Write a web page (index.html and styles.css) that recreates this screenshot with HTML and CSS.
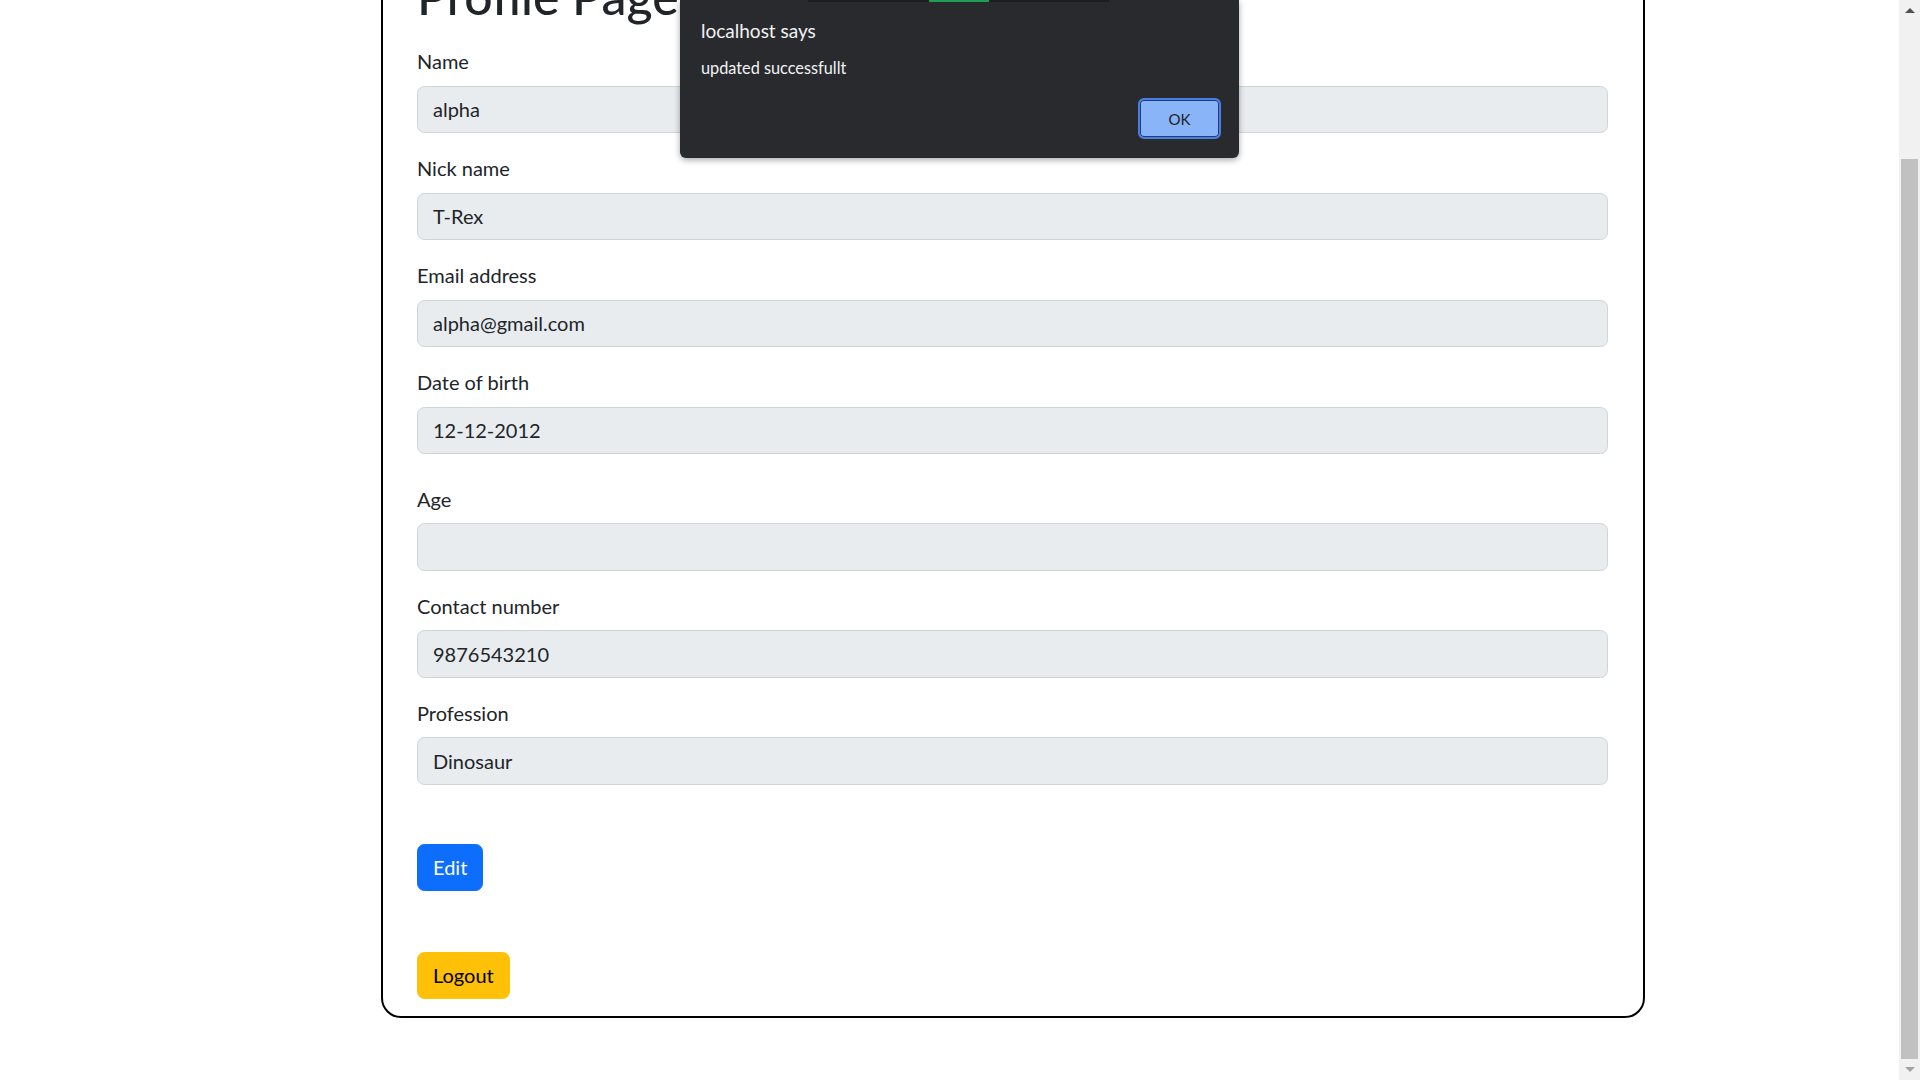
FILE: index.html
```html
<!DOCTYPE html>
<html lang="en">
<head>
<meta charset="utf-8">
<title>Profile Page</title>
<link rel="stylesheet" href="styles.css">
</head>
<body>
<div class="viewport">
  <main class="page">
    <section class="card">
      <h1 class="title">Profile Page</h1>
      <div class="field">
        <label class="form-label">Name</label>
        <div class="form-control">alpha</div>
      </div>
      <div class="field">
        <label class="form-label">Nick name</label>
        <div class="form-control">T-Rex</div>
      </div>
      <div class="field">
        <label class="form-label">Email address</label>
        <div class="form-control">alpha@gmail.com</div>
      </div>
      <div class="field field-date">
        <label class="form-label">Date of birth</label>
        <div class="form-control">12-12-2012</div>
      </div>
      <div class="field">
        <label class="form-label">Age</label>
        <div class="form-control"></div>
      </div>
      <div class="field">
        <label class="form-label">Contact number</label>
        <div class="form-control">9876543210</div>
      </div>
      <div class="field">
        <label class="form-label">Profession</label>
        <div class="form-control">Dinosaur</div>
      </div>
      <div class="actions">
        <button class="btn btn-primary">Edit</button>
        <button class="btn btn-warning">Logout</button>
      </div>
    </section>

    <div class="dialog" role="alertdialog">
      <div class="dialog-strip"><span class="dialog-strip-active"></span></div>
      <div class="dialog-title">localhost says</div>
      <div class="dialog-message">updated successfullt</div>
      <div class="dialog-buttons">
        <button class="dialog-ok">OK</button>
      </div>
    </div>
  </main>

  <div class="scrollbar">
    <div class="scroll-arrow scroll-up"><span class="tri tri-up"></span></div>
    <div class="scroll-track">
      <div class="scroll-thumb"></div>
    </div>
    <div class="scroll-arrow scroll-down"><span class="tri tri-down"></span></div>
  </div>
</div>
</body>
</html>
```

FILE: styles.css
```css
* { box-sizing: border-box; }

html, body {
  margin: 0;
  padding: 0;
  height: 100%;
  overflow: hidden;
  background: #fff;
}

body {
  font-family: "Segoe UI", Lato, Roboto, "Liberation Sans", sans-serif;
  color: #212529;
  font-size: 20px;
  line-height: 1.5;
}

.viewport {
  display: flex;
  width: 1920px;
  height: 1080px;
}

.page {
  flex: 1;
  position: relative;
  overflow: hidden;
}

/* card */
.card {
  width: 1264px;
  margin: -36px 0 0 381px;
  border: 2px solid #000;
  border-radius: 20px;
  padding: 0 35px 17px 34px;
}

.title {
  margin: 0 0 20px;
  font-size: 50px;
  line-height: 60px;
  font-weight: 500;
  color: #212529;
}

.field {
  margin-bottom: 20px;
}

.field-date {
  margin-bottom: 29.5px;
}

.form-label {
  display: block;
  margin-bottom: 9.5px;
  font-size: 20px;
  line-height: 30px;
}

.form-control {
  height: 47.5px;
  padding: 7.5px 15px;
  font-size: 20px;
  line-height: 30px;
  color: #212529;
  background: #e9ecef;
  border: 1.25px solid #ced4da;
  border-radius: 7.5px;
}

.actions {
  display: flex;
  flex-direction: column;
  align-items: flex-start;
  gap: 60.5px;
  padding-top: 39px;
}

.btn {
  font-family: inherit;
  font-size: 20px;
  line-height: 30px;
  height: 47.5px;
  padding: 7.5px 15px;
  border: 1.25px solid transparent;
  border-radius: 7.5px;
  cursor: pointer;
}

.btn-primary {
  background: #0d6efd;
  border-color: #0d6efd;
  color: #fff;
}

.btn-warning {
  background: #ffc107;
  border-color: #ffc107;
  color: #000;
}

/* alert dialog */
.dialog {
  position: absolute;
  top: 0;
  left: 680px;
  width: 559px;
  height: 158px;
  background: #292a2d;
  border-radius: 0 0 6px 6px;
  box-shadow: 0 2px 6px rgba(0, 0, 0, 0.35);
  padding: 18px 18px 19px 21px;
  display: flex;
  flex-direction: column;
  color: #f1f3f4;
}

.dialog-strip {
  position: absolute;
  top: 0;
  left: 128px;
  width: 301px;
  height: 2px;
  background: #1c1d1f;
}

.dialog-strip-active {
  position: absolute;
  left: 121px;
  top: 0;
  width: 60px;
  height: 2px;
  background: #1f9d55;
}

.dialog-title {
  font-size: 19px;
  line-height: 26px;
}

.dialog-message {
  margin-top: 12.5px;
  font-size: 16.3px;
  line-height: 22px;
}

.dialog-buttons {
  margin-top: auto;
  display: flex;
  justify-content: flex-end;
}

.dialog-ok {
  width: 83px;
  height: 41px;
  font-family: inherit;
  font-size: 15px;
  color: #202124;
  background: #8ab4f8;
  border: 2px solid #4a7fe0;
  border-radius: 6px;
  box-shadow: inset 0 0 0 1px #1d3c78;
  padding: 0;
}

/* scrollbar */
.scrollbar {
  width: 21px;
  height: 1080px;
  background: #f1f1f1;
  display: flex;
  flex-direction: column;
}

.scroll-arrow {
  height: 21px;
  display: flex;
  align-items: center;
  justify-content: center;
  flex: none;
}

.scroll-track {
  flex: 1;
  display: flex;
  flex-direction: column;
  justify-content: flex-end;
  padding: 0 2px 0 2px;
}

.scroll-thumb {
  height: 900px;
  background: #c1c1c1;
}

.tri {
  width: 0;
  height: 0;
  border-left: 5px solid transparent;
  border-right: 5px solid transparent;
}

.tri-up {
  border-bottom: 5px solid #505050;
}

.tri-down {
  border-top: 5px solid #a3a3a3;
}
```
